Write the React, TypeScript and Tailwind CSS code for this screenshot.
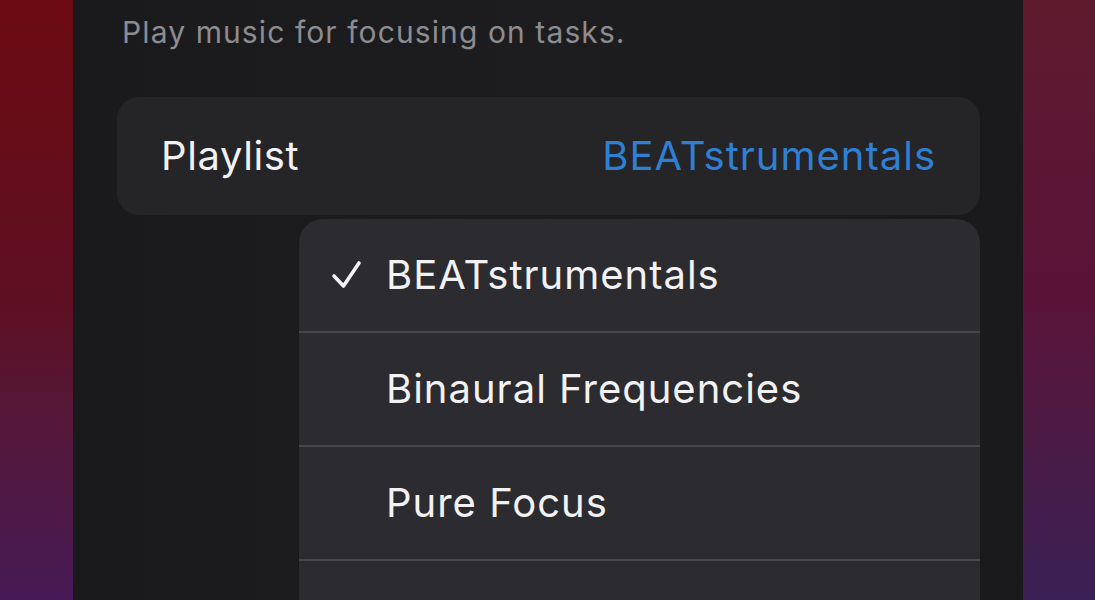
const playlists = ["BEATstrumentals", "Binaural Frequencies", "Pure Focus", ""];

function CheckMark() {
  return (
    <svg width="32" height="30" viewBox="0 0 32 30" className="shrink-0">
      <path
        d="M3 16 L12.5 26 L28 3"
        fill="none"
        stroke="#f2f2f4"
        strokeWidth="3.6"
        strokeLinecap="round"
        strokeLinejoin="round"
      />
    </svg>
  );
}

export default function App() {
  const selected = "BEATstrumentals";

  return (
    <div
      className="flex h-[600px] w-[1095px] overflow-hidden"
      style={{ fontFamily: "Inter, 'Noto Sans', sans-serif" }}
    >
      <div className="w-[73px] shrink-0 bg-gradient-to-b from-[#6c0a0f] via-[#5e0f22] to-[#461855]" />

      <div className="flex w-[950px] shrink-0 flex-col bg-gradient-to-r from-[#1a1a1d] via-[#1d1d20] to-[#1a191c] pl-[44px] pr-[43px]">
        <p className="shrink-0 pl-[5px] pt-[14px] text-[30px] leading-[36px] tracking-[1.1px] text-[#8c8c91]">
          Play music for focusing on tasks.
        </p>

        <div className="mt-[47px] flex h-[118px] shrink-0 items-center justify-between rounded-[22px] bg-[#252427] pl-[44px] pr-[44px]">
          <span className="text-[40px] tracking-[0.6px] text-[#f2f2f4]">Playlist</span>
          <span className="text-[40px] tracking-[1px] text-[#2f7fd4]">{selected}</span>
        </div>

        <div className="ml-[182px] mt-[4px] shrink-0 overflow-hidden rounded-t-[24px] bg-[#2c2b2f]">
          {playlists.map((name, i) => (
            <div
              key={i}
              className="flex h-[114px] items-center border-b-2 border-[#47464a] pl-[32px]"
            >
              <div className="w-[55px]">
                {name === selected ? <CheckMark /> : null}
              </div>
              <span className="text-[40px] tracking-[1px] text-[#f2f2f4]">{name}</span>
            </div>
          ))}
        </div>
      </div>

      <div className="flex-1 bg-gradient-to-b from-[#5e1b2e] via-[#5a1238] to-[#3a1f55]" />
    </div>
  );
}
